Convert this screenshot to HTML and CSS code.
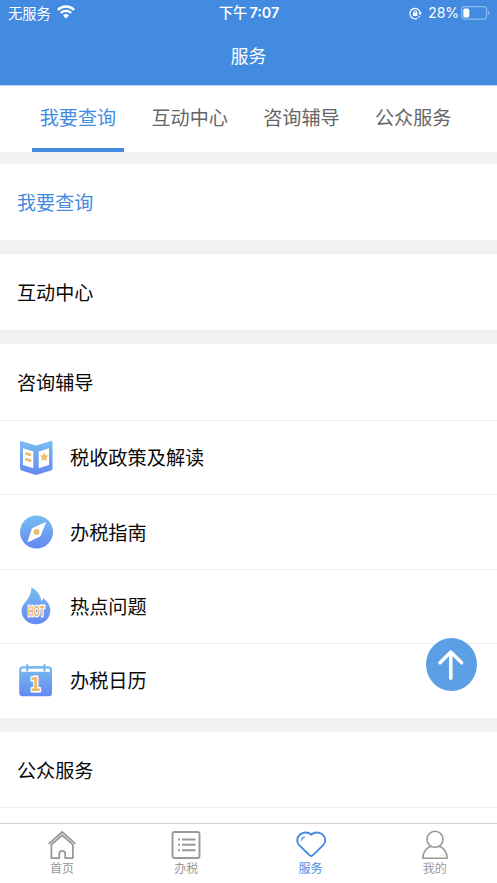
FILE: index.html
```html
<!DOCTYPE html>
<html lang="zh-CN">
<head>
<meta charset="utf-8">
<title>服务</title>
<link rel="stylesheet" href="styles.css">
</head>
<body>
<svg class="defs" width="0" height="0" aria-hidden="true">
  <defs>
    <linearGradient id="blue" x1="0" y1="0" x2="0" y2="1">
      <stop offset="0" stop-color="#77bdf0"/><stop offset="1" stop-color="#6588f2"/>
    </linearGradient>
  </defs>
</svg>
<div class="app">
  <header class="header">
    <div class="status">
      <div class="carrier"><span>无服务</span>
        <svg width="18" height="14" viewBox="0 0 18 14"><g fill="none" stroke="#fff" stroke-width="2.4"><path d="M.9 4.8a11.6 11.6 0 0 1 16.2 0"/><path d="M3.8 8a7.4 7.4 0 0 1 10.4 0"/></g><path d="M6 10.4a4.3 4.3 0 0 1 6 0L9 13.5z" fill="#fff"/></svg>
      </div>
      <div class="time">下午 <b>7:07</b></div>
      <div class="power">
        <svg width="13" height="13" viewBox="0 0 13 13"><path d="M8.5 11.2A5.2 5.2 0 1 1 11.2 5.7M10.7 8.8 9.6 10.3" fill="none" stroke="#fff" stroke-width="1.2"/><path d="M9.6 5.5h3.3l-1.6 2.7z" fill="#fff"/><rect x="4" y="5.6" width="4.5" height="3.5" rx=".5" fill="#fff"/><path d="M4.9 6V4.9a1.35 1.35 0 0 1 2.7 0V6" fill="none" stroke="#fff"/></svg>
        <span class="percent">28%</span>
        <svg class="battery" width="29" height="14" viewBox="0 0 29 14"><rect x=".6" y=".6" width="25" height="12.6" rx="3.5" fill="none" stroke="#8ab9f0" stroke-width="1.2"/><rect x="2.3" y="2.4" width="6" height="9" rx="1.7" fill="#fff"/><path d="M27 4.7a2.4 2.4 0 0 1 0 4.4z" fill="#8ab9f0"/></svg>
      </div>
    </div>
    <h1 class="title">服务</h1>
  </header>
  <nav class="tabs">
    <a class="tab active">我要查询</a><a class="tab">互动中心</a><a class="tab">咨询辅导</a><a class="tab">公众服务</a>
  </nav>
  <main class="content">
    <section class="section"><h2 class="heading current">我要查询</h2></section>
    <section class="section"><h2 class="heading">互动中心</h2></section>
    <section class="section">
      <h2 class="heading">咨询辅导</h2>
      <div class="row">
        <svg width="36" height="36" viewBox="0 0 36 36"><path d="M2 2.3Q2 .7 3.7 1.2L18 5.5l14.3-4.3Q34.5.7 34.5 2.5v26q0 1.5-1.5 2L18 35 3.5 30.6Q2 30 2 28.5z" fill="url(#blue)"/><path d="m5 8.2 10.3 3.2v16.9L5 25zM20.7 11.4 31 8.2V25l-10.3 3.3z" fill="#fff"/><path d="m8.3 13.6 3.6 1.1M8.3 19.4l4 1.2" stroke="#eebd69" stroke-width="2.8" stroke-linecap="round"/><path d="m26.2 12.6 1.3 2.7 3 .3-2.1 2.2.5 3.1-2.7-1.4-2.7 1.4.5-3.1-2.1-2.2 3-.3z" fill="#eebd69"/></svg>
        <span>税收政策及解读</span>
      </div>
      <div class="row">
        <svg width="36" height="36" viewBox="0 0 36 36"><circle cx="18.5" cy="18" r="16.5" fill="url(#blue)"/><path d="M27.6 8.5 22.1 22 10 27.7l4.4-13.1z" fill="#fff" stroke="#fff" stroke-width="1" stroke-linejoin="round"/><circle cx="18.6" cy="18" r="2.9" fill="#e6bc6b"/></svg>
        <span>办税指南</span>
      </div>
      <div class="row">
        <svg width="36" height="38" viewBox="0 0 36 38"><path d="M13.3.5C19 3.3 22.3 7.4 23.2 13.8c1.1-.5 1.7-1.5 2-2.6 4.5 3.5 7.1 7.3 7.1 12.1C32.3 31.5 26 37.2 18 37.2S3.5 31.5 3.5 23.5C3.5 16 13.8 12 13.3.5z" fill="url(#blue)"/><g transform="translate(18.2 28.7) scale(.53 1)"><text class="hot" text-anchor="middle">HOT</text></g></svg>
        <span>热点问题</span>
      </div>
      <div class="row">
        <svg class="calendar" width="36" height="36" viewBox="0 0 36 36"><rect x="1.2" y="4.3" width="32.8" height="30" rx="3.5" fill="url(#blue)"/><path d="M3.4 10V8q0-1.5 1.5-1.5h25.4q1.5 0 1.5 1.5v2q0-.2-1-.2H4.6q-1.2 0-1.2.2z" fill="#fff"/><path d="M9.2 3v5.4M26.5 3v5.4" stroke="#72b8ef" stroke-width="2.2" stroke-linecap="round"/><path d="M9.2 5.4h17.3" stroke="#72b8ef" stroke-width="2"/><g transform="translate(17.2 29.2) scale(.8 1)"><text class="day" text-anchor="middle">1</text></g></svg>
        <span>办税日历</span>
      </div>
    </section>
    <section class="section last"><h2 class="heading">公众服务</h2></section>
  </main>
  <button class="to-top" aria-label="返回顶部"><svg width="50" height="52" viewBox="0 0 50 52"><path d="M24.8 39.2V13M14 23.8 24.8 13 35.6 23.8" fill="none" stroke="#fff" stroke-width="3.5" stroke-linecap="round" stroke-linejoin="round"/></svg></button>
  <footer class="tabbar">
    <a class="item"><svg width="30" height="30" viewBox="0 0 30 30"><g fill="none" stroke="#999" stroke-width="1.8" stroke-linejoin="round"><path d="M1.7 13.9 15.2 2l13.3 11.9"/><path d="M4.4 14.6v13.5h7.8v-4.2a3 3 0 0 1 6 0v4.2h7.7V14.6L15.2 5.2z"/></g></svg><span>首页</span></a>
    <a class="item"><svg width="30" height="30" viewBox="0 0 30 30"><g fill="none" stroke="#999" stroke-width="1.9"><rect x="1.5" y="2" width="27" height="26" rx="2"/><path d="M11 9.5h13.5M11 14.8h13.5M11 20.2h13.5M7 9.5h2M7 14.8h2M7 20.2h2"/></g></svg><span>办税</span></a>
    <a class="item selected"><svg width="30" height="30" viewBox="0 0 30 30"><g fill="none" stroke="#438be0" stroke-linecap="round" stroke-linejoin="round"><path d="M15.2 4.7C12.2 1.7 7 1.8 3.7 4.8.4 8 .5 12.5 3.4 15.4l10.3 10q1.5 1.3 3 0l10.3-10c3-2.9 3-7.5-.1-10.6-3.2-3.1-8.5-3.1-11.7-.1z" stroke-width="1.9"/><path d="M5.7 10.2c.1-1.7 1.2-2.7 2.8-3" stroke-width="1.2"/></g></svg><span>服务</span></a>
    <a class="item"><svg width="30" height="30" viewBox="0 0 30 30"><g fill="none" stroke="#999" stroke-width="1.6" stroke-linejoin="round"><circle cx="15" cy="9.3" r="8"/><path d="M10.8 16.2C6 18 3.1 22.4 2.8 28.2h24.4c-.3-5.8-3.2-10.2-8-12"/></g></svg><span>我的</span></a>
  </footer>
</div>
</body>
</html>
```
FILE: styles.css
```css
* { box-sizing: border-box; }
body { margin: 0; background: #fff; color: #080808; font-family: "Noto Sans CJK SC", sans-serif; }
svg { display: block; flex: none; overflow: visible; }
.defs { position: absolute; }
.app { width: 497px; height: 883px; display: flex; flex-direction: column; overflow: hidden; }
.header { flex: none; height: 86px; background: #438be0; border-bottom: 1px solid #b4d3fc; color: #fff; }
.status { display: grid; grid-template-columns: 1fr auto 1fr; height: 26px; padding: 0 7px 2px 8px; align-items: center; font-size: 14.3px; line-height: 24px; }
.carrier, .power { display: flex; align-items: center; }
.carrier { gap: 6px; }
.carrier svg { margin-top: -1px; }
.time { font-weight: 500; font-size: 14.3px; white-space: pre; }
.time b { font-family: Inter, sans-serif; font-weight: 600; font-size: 14.3px; margin-left: -1px; }
.power { justify-content: flex-end; }
.power > svg:first-child { margin-top: 1px; }
.percent { margin: 0 2px 0 6px; font-family: Inter, sans-serif; font-size: 14px; letter-spacing: -.1px; }
.battery { margin-top: 0; }
.title { margin: 0; padding-top: 16px; font-size: 17.8px; font-weight: 400; line-height: 26px; text-align: center; }
.tabs { flex: none; height: 66px; display: grid; grid-template-columns: repeat(4, 1fr); padding: 0 28px 0 22px; }
.tab { margin: 0 9.5px; border-bottom: 4px solid transparent; text-align: center; font-size: 19.1px; line-height: 62px; color: #666; white-space: nowrap; }
.tab.active { color: #438be0; border-color: #438be0; }
.content { flex: 1; min-height: 0; overflow: hidden; background: #f1f1f1; padding-top: 12px; display: flex; flex-direction: column; gap: 14px; }
.section { flex: none; background: #fff; }
.heading { margin: 0; height: 76px; padding-left: 17px; font-size: 19.1px; font-weight: 400; line-height: 77px; }
.heading.current { color: #438be0; }
.row { height: 74.4px; border-top: 1px solid #eee; padding-left: 18px; display: flex; align-items: center; gap: 16px; font-size: 19.2px; }
.row span { margin-top: -1px; }
.calendar { margin-top: -2px; }
.last { flex: 1; }
.last .heading { border-bottom: 1px solid #eee; }
.to-top { position: absolute; left: 426px; top: 638px; width: 51px; height: 53px; border: 0; border-radius: 50%; padding: 0; background: #5c9fe4; }
.tabbar { flex: none; height: 60px; border-top: 1px solid #d0d0d0; background: #fff; display: grid; grid-template-columns: repeat(4, 1fr); }
.item { display: flex; flex-direction: column; align-items: center; padding-top: 6px; font-size: 12px; line-height: 16px; color: #999; }
.item.selected { color: #438be0; }
.hot { font: bold 15px "Liberation Sans", sans-serif; fill: #eab968; stroke: #fff; stroke-width: 3px; stroke-linejoin: round; paint-order: stroke; }
.day { font: bold 20px "DejaVu Sans", sans-serif; fill: #e9bb68; stroke: #fff; stroke-width: 3px; stroke-linejoin: round; paint-order: stroke; }
```
